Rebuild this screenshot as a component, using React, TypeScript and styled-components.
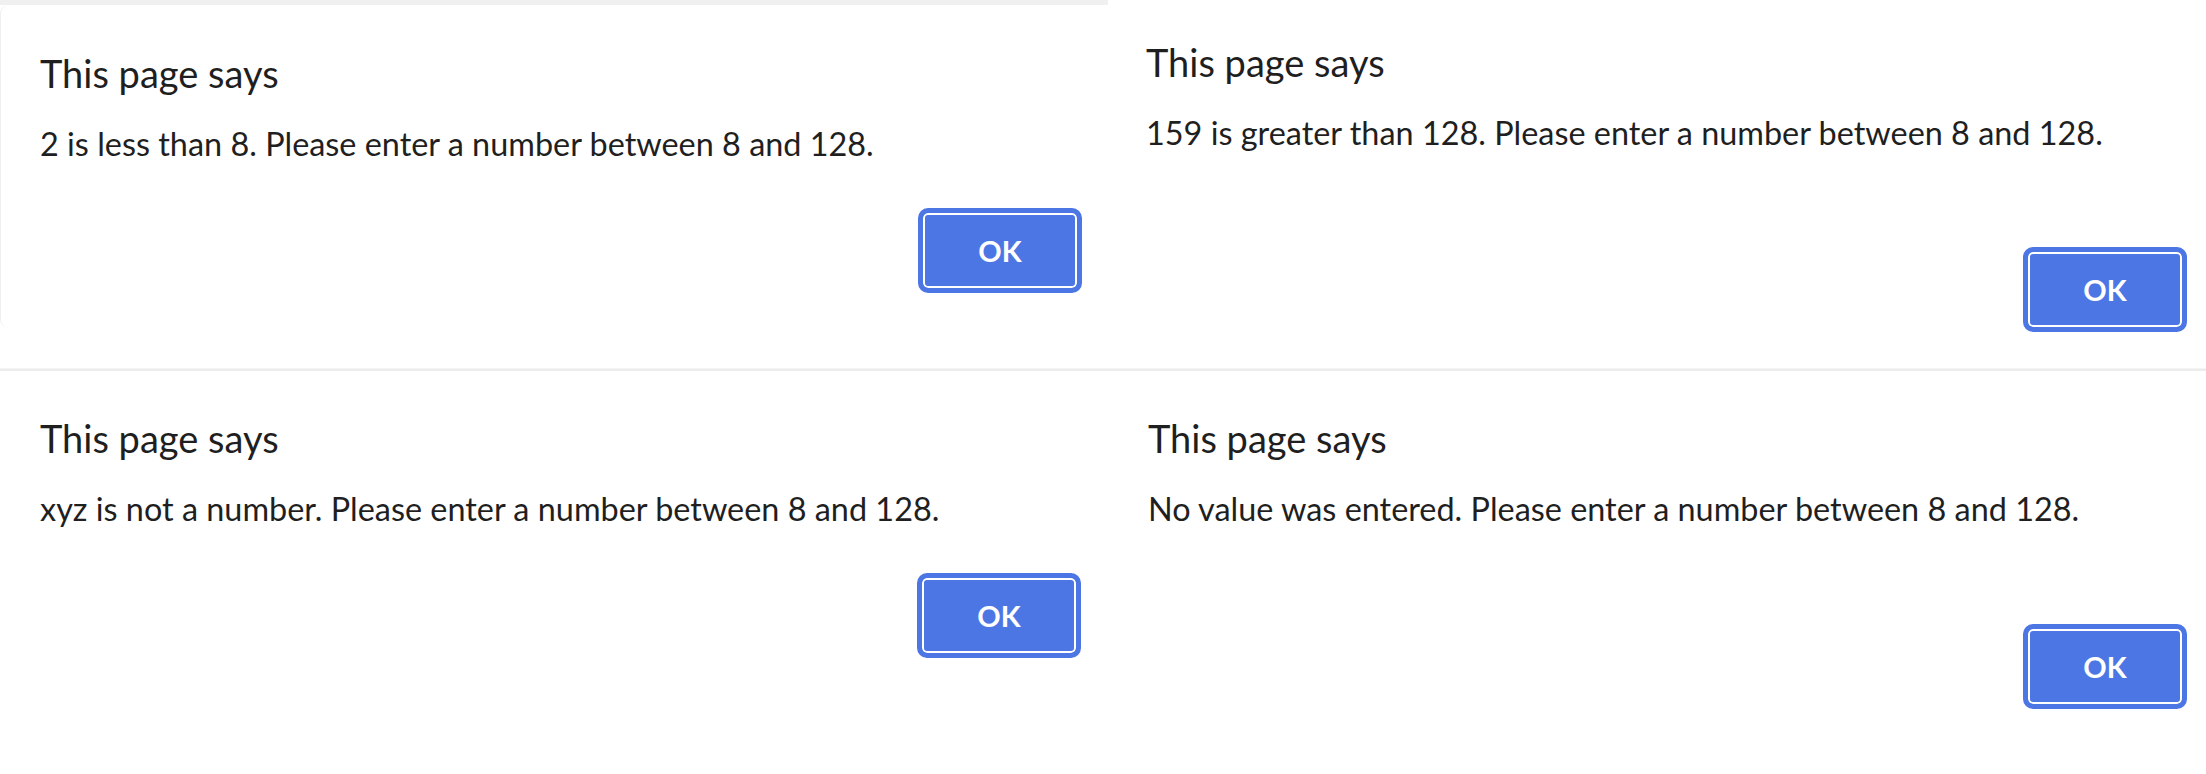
import styled, { createGlobalStyle } from "styled-components";

const GlobalStyle = createGlobalStyle`
  html, body {
    margin: 0;
    padding: 0;
    background: #ffffff;
  }
  body {
    font-family: Lato, "Open Sans", sans-serif;
    color: #1f1f1f;
  }
`;

const Sheet = styled.div`
  width: 2206px;
  height: 774px;
  display: flex;
  flex-direction: column;
  overflow: hidden;
`;

const Row = styled.div<{ $height: number }>`
  display: grid;
  grid-template-columns: 1108px 1fr;
  height: ${(p) => p.$height}px;
`;

const Divider = styled.div`
  height: 3px;
  background: #ececec;
  border-top: 1px solid #f4f4f4;
  box-sizing: border-box;
`;

const Cell = styled.div<{ $strip?: boolean }>`
  display: flex;
  flex-direction: column;
  background: #ffffff;
  border-top: ${(p) => (p.$strip ? "5px solid #f0f0f0" : "none")};
  box-sizing: border-box;
`;

const Dialog = styled.div<{ $top: number; $left: number; $right: number; $edge?: boolean }>`
  display: flex;
  flex-direction: column;
  background: #ffffff;
  padding: ${(p) => p.$top}px ${(p) => p.$right}px 0 ${(p) => p.$left}px;
  box-sizing: border-box;
  height: ${(p) => (p.$edge ? "323px" : "100%")};
  border-radius: ${(p) => (p.$edge ? "9px 0 0 9px" : "0")};
  border-left: ${(p) => (p.$edge ? "1px solid #efefef" : "none")};
`;

const Title = styled.div`
  font-size: 38px;
  line-height: 44px;
  font-weight: 400;
  color: #1f1f1f;
`;

const Message = styled.div`
  margin-top: 29px;
  font-size: 32.4px;
  line-height: 40px;
  color: #1f1f1f;
  white-space: nowrap;
`;

const Actions = styled.div<{ $gap: number }>`
  display: flex;
  justify-content: flex-end;
  margin-top: ${(p) => p.$gap}px;
`;

const OkButton = styled.button`
  width: 164px;
  height: 85px;
  box-sizing: border-box;
  border: 5px solid #4d76e5;
  border-radius: 10px;
  box-shadow: inset 0 0 0 2px #ffffff;
  background: #4d76e5;
  color: #ffffff;
  font-family: Lato, "Open Sans", sans-serif;
  font-size: 29px;
  font-weight: 700;
  padding: 0;
  cursor: pointer;
`;

type AlertProps = {
  message: string;
  top: number;
  gap: number;
  left: number;
  right: number;
  edge?: boolean;
};

const Alert = ({ message, top, gap, left, right, edge }: AlertProps) => (
  <Dialog $top={top} $left={left} $right={right} $edge={edge}>
    <Title>This page says</Title>
    <Message>{message}</Message>
    <Actions $gap={gap}>
      <OkButton>OK</OkButton>
    </Actions>
  </Dialog>
);

export default function App() {
  return (
    <>
      <GlobalStyle />
      <Sheet>
        <Row $height={368}>
          <Cell $strip>
            <Alert
              edge
              top={46}
              gap={44}
              left={39}
              right={26}
              message="2 is less than 8. Please enter a number between 8 and 128."
            />
          </Cell>
          <Cell>
            <Alert
              top={40}
              gap={94}
              left={38}
              right={19}
              message="159 is greater than 128. Please enter a number between 8 and 128."
            />
          </Cell>
        </Row>
        <Divider />
        <Row $height={403}>
          <Cell>
            <Alert
              top={45}
              gap={44}
              left={40}
              right={27}
              message="xyz is not a number. Please enter a number between 8 and 128."
            />
          </Cell>
          <Cell>
            <Alert
              top={45}
              gap={95}
              left={40}
              right={19}
              message="No value was entered. Please enter a number between 8 and 128."
            />
          </Cell>
        </Row>
      </Sheet>
    </>
  );
}
